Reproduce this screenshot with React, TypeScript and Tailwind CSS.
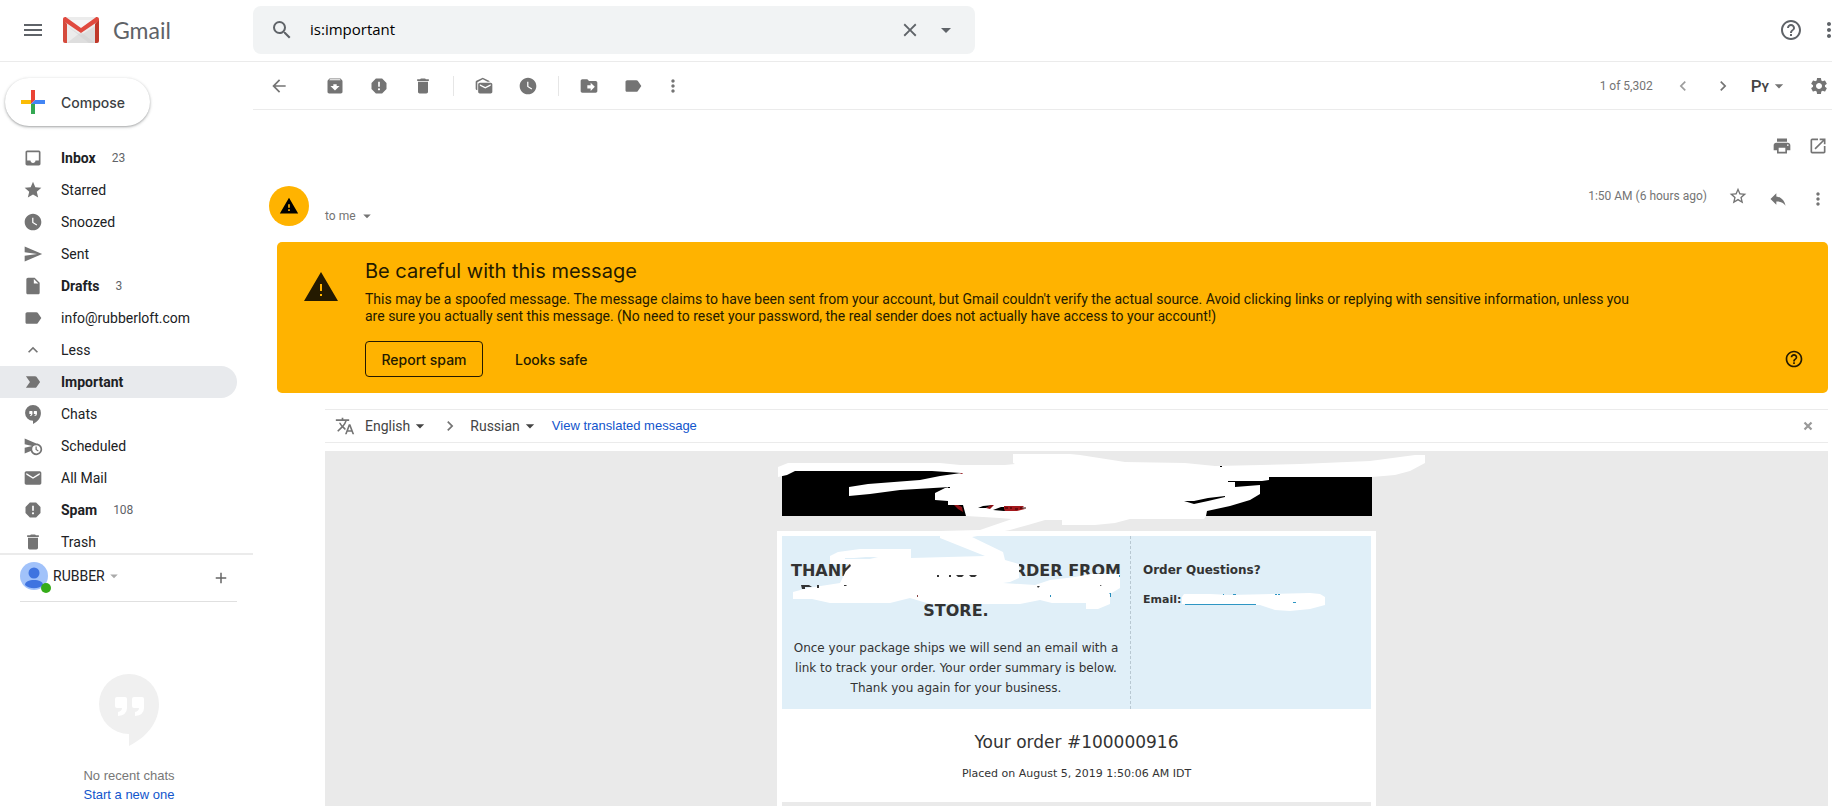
import React from "react";
import type { ReactNode } from "react";
import type { IconType } from "react-icons";
import {
  MdMenu, MdSearch, MdClose, MdArrowDropDown, MdHelpOutline, MdMoreVert, MdArrowBack, MdArchive, MdReport,
  MdDelete, MdMarkAsUnread, MdWatchLater, MdDriveFileMove, MdLabel, MdChevronLeft, MdChevronRight, MdSettings,
  MdPrint, MdLaunch, MdStarBorder, MdReply, MdTranslate, MdWarning, MdInbox, MdStar, MdSend,
  MdInsertDriveFile, MdExpandLess, MdLabelImportant, MdScheduleSend, MdMail, MdAdd,
} from "react-icons/md";

function IconButton({ icon: Icon, label, className = "", size = 20 }: { icon: IconType; label: string; className?: string; size?: number }) {
  return (
    <button type="button" aria-label={label} className={`flex shrink-0 items-center justify-center ${className}`}>
      <Icon size={size} />
    </button>
  );
}

function HangoutsBubble({ className = "" }: { className?: string }) {
  return (
    <svg viewBox="0 0 60 72" className={className} aria-hidden="true">
      <path d="M30 0a30 30 0 0 1 30 30C60 48 48 63 30 72V60A30 30 0 0 1 30 0Z" fill="currentColor" />
      <path d="M18 23h8a2 2 0 0 1 2 2v9q0 7-9 8v-4q4-1 4-4h-5a2 2 0 0 1-2-2v-7a2 2 0 0 1 2-2ZM35 23h8a2 2 0 0 1 2 2v9q0 7-9 8v-4q4-1 4-4h-5a2 2 0 0 1-2-2v-7a2 2 0 0 1 2-2Z" fill="#fff" />
    </svg>
  );
}

function GmailLogo() {
  return (
    <svg viewBox="0 0 36 26" className="h-[26px] w-9" aria-hidden="true">
      <rect x="1" width="34" height="26" rx="2" fill="#ececec" />
      <path d="M4 26 18 15l14 11Z" fill="#dedede" />
      <path d="M4 9 26 26h6V9L18 18Z" fill="#d2d2d2" opacity=".55" />
      <path d="M4 6 18 16 32 6V3H4Z" fill="#f5f5f5" />
      <path d="M0 2v22a2 2 0 0 0 2 2h2V7Z" fill="#d54b3d" />
      <path d="M36 2v22a2 2 0 0 1-2 2h-2V7Z" fill="#c0392b" />
      <path d="M0 2.2C0 .4 2 -.5 3.400.5L18 11 32.600.5C34 -.5 36 .4 36 2.200c0 1-.3 1.700-1.100 2.300L18 16 1.100 4.500C.3 3.900 0 3.200 0 2.200Z" fill="#e04a3f" />
    </svg>
  );
}

const folders: { name: string; icon?: IconType; count?: string; strong?: boolean; active?: boolean }[] = [
  { name: "Inbox", icon: MdInbox, count: "23", strong: true },
  { name: "Starred", icon: MdStar },
  { name: "Snoozed", icon: MdWatchLater },
  { name: "Sent", icon: MdSend },
  { name: "Drafts", icon: MdInsertDriveFile, count: "3", strong: true },
  { name: "info@rubberloft.com", icon: MdLabel },
  { name: "Less", icon: MdExpandLess },
  { name: "Important", icon: MdLabelImportant, strong: true, active: true },
  { name: "Chats" },
  { name: "Scheduled", icon: MdScheduleSend },
  { name: "All Mail", icon: MdMail },
  { name: "Spam", icon: MdReport, count: "108", strong: true },
  { name: "Trash", icon: MdDelete },
];

function Header() {
  return (
    <header className="flex h-[62px] shrink-0 items-center border-b border-[#ebebeb] pb-[1px] text-[#5f6368]">
      <div className="flex w-[253px] shrink-0 items-center pl-[21px]">
        <IconButton icon={MdMenu} label="Main menu" size={24} />
        <a href="#inbox" className="ml-[18px] flex items-center gap-[14px] font-['Lato',sans-serif] text-[23px] leading-6">
          <GmailLogo />
          Gmail
        </a>
      </div>
      <form className="-mt-[1px] flex h-12 w-[722px] items-center rounded-lg bg-[#f1f3f4]">
        <IconButton icon={MdSearch} label="Search" size={24} className="ml-[17px]" />
        <input aria-label="Search mail" defaultValue="is:important" className="ml-4 min-w-0 flex-1 bg-transparent font-['Open_Sans',sans-serif] text-[15px] text-black outline-none" />
        <IconButton icon={MdClose} label="Clear search" size={22} className="w-9" />
        <IconButton icon={MdArrowDropDown} label="Search options" size={24} className="mr-[11px] w-9" />
      </form>
      <div className="-mr-[9px] ml-auto flex items-center gap-[14px]">
        <IconButton icon={MdHelpOutline} label="Support" size={24} />
        <IconButton icon={MdMoreVert} label="Apps" size={24} />
      </div>
    </header>
  );
}

function Sidebar() {
  return (
    <aside className="flex w-[253px] shrink-0 flex-col">
      <div className="shrink-0 pb-4 pl-[5px] pt-4">
        <button type="button" className="flex h-12 w-[145px] items-center gap-4 rounded-full pl-4 font-['Inter',sans-serif] text-[14px] font-medium text-[#3c4043] shadow-[0_1px_2px_0_rgba(60,64,67,0.35),0_1px_3px_1px_rgba(60,64,67,0.12)]">
          <svg viewBox="0 0 24 24" className="size-6" aria-hidden="true">
            <path d="M0 10h10v4H0z" fill="#fbbc05" />
            <path d="M10 0h4v10l-4 4z" fill="#ea4335" />
            <path d="M14 10h10v4H10z" fill="#4285f4" />
            <path d="M10 14h4v10h-4z" fill="#34a853" />
          </svg>
          Compose
        </button>
      </div>
      <nav className="min-h-0 flex-1 overflow-hidden">
        <ul>
          {folders.map(({ name, icon: Icon, count, strong, active }) => (
            <li key={name}>
              <a
                href={`#${name}`}
                className={`mr-4 flex h-8 items-center rounded-r-full pl-[23px] text-sm text-[#202124] ${active ? "bg-[#e8eaed]" : ""} ${strong ? "font-bold" : ""}`}
              >
                <span className="flex w-5 justify-center text-[#747474]">
                  {Icon ? <Icon size={20} /> : <HangoutsBubble className="h-[19px] w-4" />}
                </span>
                <span className="ml-[18px]">{name}</span>
                {count && <span className="ml-4 text-xs font-normal text-[#5f6368]">{count}</span>}
              </a>
            </li>
          ))}
        </ul>
      </nav>
      <section aria-label="Chats" className="h-[253px] shrink-0 border-t-2 border-[#ebebeb]">
        <div className="ml-5 mr-4 flex h-[47px] items-start border-b border-[#e0e0e0] pt-[7px]">
          <span className="relative">
            <svg viewBox="0 0 28 28" className="size-7" aria-hidden="true">
              <circle cx="14" cy="14" r="14" fill="#a1c2fa" />
              <circle cx="14" cy="11" r="5.500" fill="#3f74e0" />
              <path d="M5 23c0-3.500 4-5 9-5s9 1.500 9 5a14 14 0 0 1-18 0Z" fill="#3f74e0" />
            </svg>
            <span className="absolute -bottom-[3px] -right-[3px] size-[10px] rounded-full bg-[#35ac19]" />
          </span>
          <button type="button" className="ml-[5px] flex h-7 items-center text-sm text-[#202124]">
            RUBBER
            <MdArrowDropDown size={18} className="text-[#aaa]" />
          </button>
          <IconButton icon={MdAdd} label="New conversation" size={18} className="ml-auto mr-[7px] h-8 text-[#666]" />
        </div>
        <div className="flex flex-col items-center pl-[5px] pt-[72px] font-['Liberation_Sans',sans-serif] text-[13px] leading-[19px] text-[#777]">
          <HangoutsBubble className="h-[72px] w-[60px] text-[#f0f0f0]" />
          <p className="mt-5">No recent chats</p>
          <a href="#new-chat" className="text-[#15c]">Start a new one</a>
        </div>
      </section>
    </aside>
  );
}

function Separator() {
  return <span className="ml-[11px] mr-[9px] h-5 w-px bg-[#e6e6e6]" />;
}

function Toolbar() {
  return (
    <div className="flex h-12 shrink-0 items-center border-b border-[#ebebeb] pl-4 text-[#747474]">
      <IconButton icon={MdArrowBack} label="Back" className="mr-6 w-5" />
      <div className="flex items-center">
        <IconButton icon={MdArchive} label="Archive" className="w-11" />
        <IconButton icon={MdReport} label="Report spam" className="w-11" />
        <IconButton icon={MdDelete} label="Delete" className="w-11" />
        <span className="mx-2 h-5 w-px bg-[#e6e6e6]" />
        <IconButton icon={MdMarkAsUnread} label="Mark as unread" className="w-11" />
        <IconButton icon={MdWatchLater} label="Snooze" className="w-11" />
        <span className="mx-2 h-5 w-px bg-[#e6e6e6]" />
        <IconButton icon={MdDriveFileMove} label="Move to" className="w-11" />
        <IconButton icon={MdLabel} label="Labels" className="w-11" />
        <IconButton icon={MdMoreVert} label="More" className="w-9" />
      </div>
      <div className="ml-auto flex items-center pr-[3px]">
        <span className="text-xs">1 of 5,302</span>
        <IconButton icon={MdChevronLeft} label="Newer" className="ml-5 w-5 opacity-70" />
        <IconButton icon={MdChevronRight} label="Older" className="ml-5 w-5" />
        <button type="button" aria-label="Input tools" className="ml-[18px] mr-5 flex items-center">
          <span className="flex items-baseline pt-[2px] text-[17px] font-medium leading-5 text-[#444]">
            P<span className="text-[12px] font-bold">Y</span>
          </span>
          <MdArrowDropDown size={20} />
        </button>
        <IconButton icon={MdSettings} label="Settings" />
      </div>
    </div>
  );
}

function WarningBanner() {
  return (
    <section className="ml-6 mt-4 flex rounded-[5px] bg-[#ffb300] pb-4 pl-[27px] pr-6 pt-[19px] text-[#241a00]">
      <svg viewBox="0 0 34 29" className="mt-[11px] h-[29px] w-[34px] shrink-0" aria-hidden="true">
        <path fillRule="evenodd" d="M17 0 34 29H0ZM16 12h2v7h-2ZM16 22h2v2h-2Z" fill="currentColor" />
      </svg>
      <div className="ml-[27px] min-w-0 flex-1 pr-[140px]">
        <h2 className="font-['Inter',sans-serif] text-[20px] leading-5">Be careful with this message</h2>
        <p className="mt-[10px] text-sm leading-[17px]">
          This may be a spoofed message. The message claims to have been sent from your account, but Gmail couldn't verify the actual source. Avoid clicking links or replying with sensitive information, unless you are sure you actually sent this message. (No need to reset your password, the real sender does not actually have access to your account!)
        </p>
        <div className="mt-4 flex gap-4 font-['Inter',sans-serif] text-[14px] font-medium">
          <button type="button" className="h-9 w-[118px] rounded border border-[#241a00]">Report spam</button>
          <button type="button" className="h-9 px-4">Looks safe</button>
        </div>
      </div>
      <IconButton icon={MdHelpOutline} label="Learn more" className="mb-2 self-end" />
    </section>
  );
}

function TranslateBar() {
  return (
    <div className="ml-[72px] mt-4 flex h-[34px] items-center border-y border-[#ebebeb] pl-[10px] text-sm text-[#444]">
      <MdTranslate size={20} className="text-[#747474]" />
      <button type="button" className="ml-[10px] flex items-center">English<MdArrowDropDown size={20} /></button>
      <MdChevronRight size={20} className="mx-[10px] text-[#747474]" />
      <button type="button" className="flex items-center">Russian<MdArrowDropDown size={20} /></button>
      <a href="#translate" className="ml-3 font-['Liberation_Sans',sans-serif] text-[13px] text-[#15c]">View translated message</a>
      <button type="button" aria-label="Dismiss" className="ml-auto mr-[14px] text-[#999]">
        <svg viewBox="0 0 12 12" className="size-3" aria-hidden="true">
          <path d="m2.500 2.500 7 7m0-7-7 7" stroke="currentColor" strokeWidth="2.200" />
        </svg>
      </button>
    </div>
  );
}

function BrushStrokes() {
  return (
    <svg viewBox="760 440 680 180" className="pointer-events-none absolute -left-[17px] -top-[11px] h-[180px] w-[680px]" aria-hidden="true">
      <path fill="#fff" d="M778 477V467L788 463H940L960 465H1005L1015 464 1013 463V454H1070L1080 455 1125 462 1185 463 1215 466 1300 464 1370 461 1400 457 1415 455H1425V463L1410 471 1395 475 1372 477H1269V480L1262 481H1228V482H1235V487L1260 485V494L1250 500 1230 506 1207 511 1206 516 1204 519H1130L1115 523 1095 525H1062V520H1045L1028 525 1010 530 972 537 1003 552 1005 560 1019 564 1019 578 1010 582 1003 583 1035 585 1050 580 1075 577 1090 574H1120V588L1110 594V604L1098 609H1086V603H1052L1040 600 1020 604H930L910 598 890 603H830L812 599H793V592L808 588 840 583 846 571 851 566 850 564H830V556L838 552 860 549H911V558L985 556 940 538V531L980 530 1012 519 1000 518 966 516 963 505H948V501L935 500V493L945 488 950 487 900 490 870 494 849 496V487L868 484 920 480 940 476 961 473 932 471H795L787 475Z" />
      <path d="M845 558h9l12-1h12l-8 2h-25Z" fill="#e0eff8" />
      <path d="M1184 501h10l14-3 17-2v1l-17 4-14 3ZM1220 466h2v1h-2ZM948 487h2v1h-2ZM978 508l5-2 10-1-7 3ZM993 510l8-3 8 0 5 3-10 1Z" fill="#000" />
      <path d="m954 505 4 4 5 3-1-5-4-2ZM959 473h4l-1 1ZM986 508l5-3h3l-4 4Z" fill="#8e1116" />
      <path d="M1004 506h20l-2 2 3 1-8 2h-12l-1-2Z" fill="#a3181c" />
      <path d="M1005 508h3m2 0h2m3 1h3m2-1h6" stroke="#300" />
      <path d="M801 585h8l3 2h-7v2h-3ZM817 585h2v3h-2ZM844 585h2l1 1h-3ZM937 575h2v2h-2ZM949 575h2v2h-2ZM956 575h8l-2 2h-4ZM969 575h8l-2 2h-4ZM1037 586h3l-2 2ZM1100 585h2l-2 1Z" fill="#333" />
      <path d="M917 595h1v2h-1Z" fill="#844" />
      <path d="M1050 595h1v2h-1ZM1109 593h2v4h-1v-3ZM1119 575h1v2h-1Z" fill="#268cbb" />
      <path fill="#fff" d="M1182 597 1184 594H1210L1230 595 1310 593 1320 594 1325 597V605L1310 609 1290 611 1275 610 1260 605 1182 604Z" />
      <path d="M1185 604h71v1h-71ZM1223 594h1v1h-1ZM1233 594h3v1h-3ZM1275 594h2v1h-2ZM1278 594h2v1h-2ZM1293 602h3v1h-3Z" fill="#2e96c4" />
    </svg>
  );
}

function EmailBody() {
  return (
    <div className="ml-[72px] mt-2 flex min-h-0 flex-1 justify-center overflow-hidden bg-[#eaeaea] font-['DejaVu_Sans',sans-serif] text-[#333]">
      <article className="relative w-[599px]">
        <div className="ml-[5px] mr-1 mt-5 h-[45px] bg-black" />
        <div className="mt-[15px] bg-white px-[5px] pt-[5px]">
          <div className="flex h-[173px] bg-[#e0eff8]">
            <div className="w-[348px] shrink-0 text-center">
              <h1 className="mt-[25px] text-[16px] font-bold leading-5">
                THANK YOU FOR YOUR ORDER FROM<span className="block h-5" />STORE.
              </h1>
              <p className="mt-[17px] text-[12px] leading-5">
                Once your package ships we will send an email with a<br />
                link to track your order. Your order summary is below.<br />
                Thank you again for your business.
              </p>
            </div>
            <div className="flex-1 border-l border-dashed border-[#b8c8d2] pl-3 font-bold">
              <h2 className="mt-6 text-[12px] leading-5">Order Questions?</h2>
              <p className="mt-[10px] text-[11px] leading-5">Email:</p>
            </div>
          </div>
          <h2 className="mt-[23px] text-center text-[17px] leading-5">Your order #100000916</h2>
          <p className="mt-3 text-center text-[11px] leading-5">Placed on August 5, 2019 1:50:06 AM IDT</p>
          <div className="mt-[18px] h-5 bg-[#eaeaea]" />
        </div>
        <BrushStrokes />
      </article>
    </div>
  );
}

function Row({ children, className }: { children: ReactNode; className: string }) {
  return <div className={`flex shrink-0 text-[#747474] ${className}`}>{children}</div>;
}

export default function App() {
  return (
    <div className="flex h-screen min-h-0 flex-col overflow-hidden bg-white font-['Roboto',sans-serif] text-[#202124]">
      <Header />
      <div className="flex min-h-0 flex-1">
        <Sidebar />
        <main className="flex min-w-0 flex-1 flex-col">
          <Toolbar />
          <Row className="h-[72px] items-center justify-end gap-4 pr-1">
            <IconButton icon={MdPrint} label="Print all" />
            <IconButton icon={MdLaunch} label="In new window" />
          </Row>
          <div className="flex min-h-0 flex-1 flex-col pr-1">
            <Row className="mt-1 h-10 items-start pl-4">
              <span className="flex size-10 items-center justify-center rounded-full bg-[#ffb300] text-black">
                <MdWarning size={20} />
              </span>
              <button type="button" className="ml-4 mt-5 flex items-center gap-[2px] text-xs leading-5">
                to me
                <MdArrowDropDown size={18} />
              </button>
              <time className="ml-auto text-xs leading-5">1:50 AM (6 hours ago)</time>
              <IconButton icon={MdStarBorder} label="Star" className="ml-[21px] h-5" />
              <IconButton icon={MdReply} label="Reply" className="ml-5 h-[26px]" />
              <IconButton icon={MdMoreVert} label="More options" className="ml-5 h-[26px]" />
            </Row>
            <WarningBanner />
            <TranslateBar />
            <EmailBody />
          </div>
        </main>
      </div>
    </div>
  );
}
